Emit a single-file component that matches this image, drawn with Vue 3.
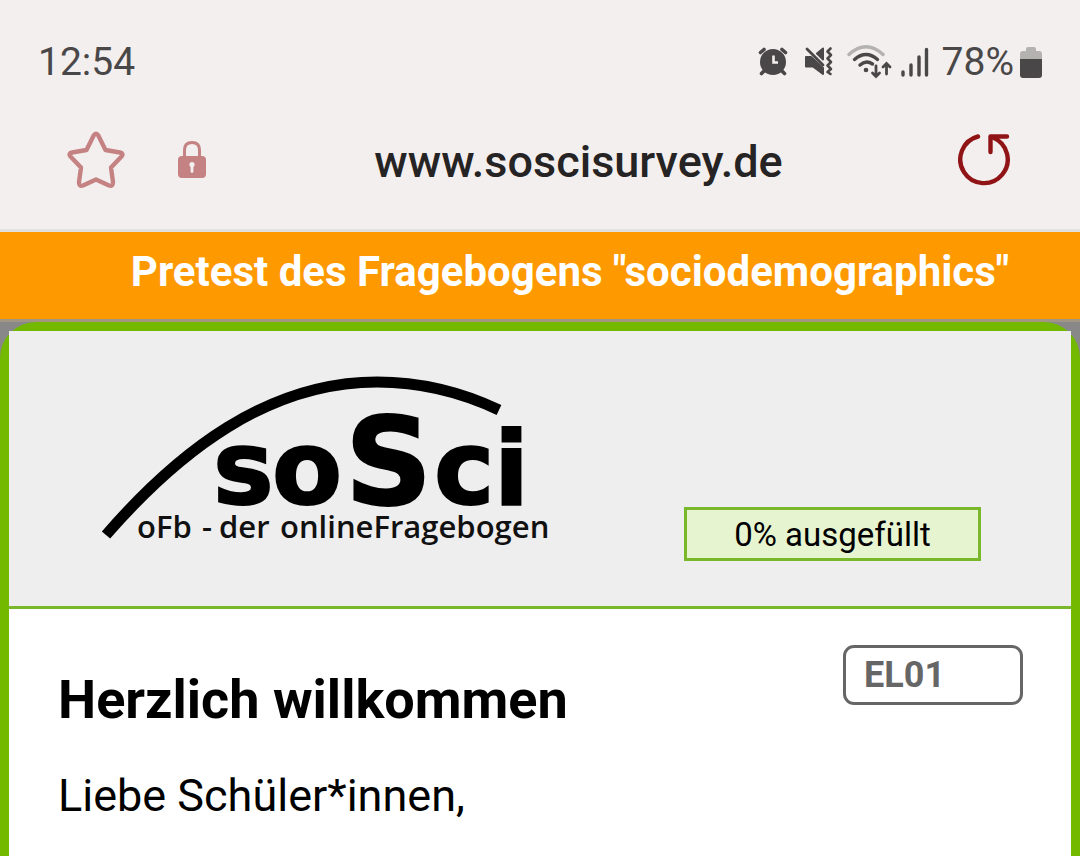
<script setup>
import { ref } from 'vue'

const time = '12:54'
const battery = '78%'
const address = ref('www.soscisurvey.de')
const progress = 0
</script>

<template>
  <div class="screen">
    <header class="browser">
      <div class="status">
        <span>{{ time }}</span>
        <div class="indicators">
          <svg class="alarm" width="32" height="32" viewBox="0 0 32 32" role="img" aria-label="Wecker">
            <g fill="none" stroke="#4a4748" stroke-width="3.6" stroke-linecap="round">
              <path d="M3.500 6.500 7 3.500M28.500 6.500 25 3.500M7 25 4.500 27.500M25 25 27.500 27.500" />
            </g>
            <circle cx="16" cy="16" r="13" fill="#4a4748" />
            <path d="M16.500 9.500V16.500H21" fill="none" stroke="#f3efee" stroke-width="2.600" />
          </svg>
          <svg class="mute" width="32" height="32" viewBox="0 0 32 32" role="img" aria-label="Vibration">
            <g fill="#4a4748" stroke="#4a4748" stroke-width="2" stroke-linejoin="round">
              <path d="M3 11H8L20 22V28L10 20.500H3Z" />
              <path d="M14 7.500 20 2.500V13.500Z" />
            </g>
            <path d="M4 3 20 19" fill="none" stroke="#4a4748" stroke-width="2.800" stroke-linecap="round" />
            <path d="M27.500 2.500 24.500 5.500 28 9 24.500 12.500 28 16 24.500 19.500 28 23 24.500 26 27.500 28" fill="none" stroke="#4a4748" stroke-width="2.600" stroke-linecap="round" stroke-linejoin="round" />
          </svg>
          <svg class="wifi" width="46" height="36" viewBox="0 0 46 36" role="img" aria-label="WLAN">
            <g fill="none" stroke-width="3.400" stroke-linecap="round">
              <path d="M3 10.500Q20 -5 37 10.500" stroke="#b4b1b1" />
              <path d="M8.500 15.500Q20 5.500 31.500 15.500M14 21Q20 15.500 26.500 20" stroke="#4a4748" />
              <path d="M30 22V32.500M26.500 29 30 32.500 33.500 29M40.500 30V19.500M37 23 40.500 19.500 44 23" stroke="#4a4748" stroke-width="2.800" />
            </g>
            <circle cx="20" cy="26" r="2.300" fill="#4a4748" />
          </svg>
          <svg class="signal" width="30" height="32" viewBox="0 0 30 32" role="img" aria-label="Empfang">
            <path d="M3 26V29M11 19V29M19 11V29M26.500 3.500V29" fill="none" stroke="#4a4748" stroke-width="3.400" stroke-linecap="round" />
          </svg>
          <span>{{ battery }}</span>
          <svg class="battery" width="22" height="32" viewBox="0 0 22 32" aria-hidden="true">
            <path d="M6 3Q6 1 8 1H14Q16 1 16 3V5H19Q22 5 22 8V14H0V8Q0 5 3 5H6Z" fill="#b4b1b1" />
            <path d="M0 13H22V29Q22 32 19 32H3Q0 32 0 29Z" fill="#4a4748" />
          </svg>
        </div>
      </div>
      <div class="toolbar">
        <div class="tools">
          <button type="button" aria-label="Lesezeichen">
            <svg width="58" height="58" viewBox="0 0 58 58">
              <path d="M26.700 4.500Q29 1 31.300 4.500L38.500 19 53 21.500Q57 22.500 54.500 25.500L44 36.500 46 51Q46 56 42 54.500L29 48.500 16 54.500Q12 56 12 51L14 36.500 3.500 25.500Q1 22.500 5 21.500L19.500 19Z" fill="none" stroke="#c58283" stroke-width="4.400" stroke-linejoin="round" />
            </svg>
          </button>
          <button type="button" aria-label="Sichere Verbindung">
            <svg width="28" height="38" viewBox="0 0 28 38">
              <path d="M6.500 17V9Q6.500 1.500 14 1.500T21.500 9V17" fill="none" stroke="#c58283" stroke-width="3" />
              <rect y="15" width="28" height="22" rx="4" fill="#c58283" />
              <circle cx="14" cy="23.500" r="2.600" fill="#f3efee" />
              <path d="M14 24V30.500" stroke="#f3efee" stroke-width="2.800" stroke-linecap="round" />
            </svg>
          </button>
        </div>
        <input v-model="address" class="address" type="text" aria-label="Adresse" />
        <button type="button" class="reload" aria-label="Neu laden">
          <svg width="54" height="54" viewBox="0 0 54 54">
            <path d="M22 3.500A23.700 23.700 0 1 0 37 4.500" fill="none" stroke="#901416" stroke-width="4.400" stroke-linecap="round" />
            <path d="M34.500 19V3.500H51" fill="none" stroke="#901416" stroke-width="4.400" stroke-linecap="round" stroke-linejoin="round" />
          </svg>
        </button>
      </div>
    </header>

    <div class="banner">Pretest des Fragebogens "sociodemographics"</div>

    <main class="page">
      <div class="card">
        <div class="masthead">
          <svg class="logo" width="460" height="180" viewBox="0 0 460 180" role="img" aria-label="soSci oFb - der onlineFragebogen">
            <path d="M15 165C88 81 177 12 286 12C331 12 370 22 408 40" fill="none" stroke="#000" stroke-width="11" />
            <g class="wordmark">
              <text x="122" y="134">s</text>
              <text x="181" y="134">o</text>
              <text class="big" x="254" y="134">S</text>
              <text x="343" y="134">c</text>
              <text x="403" y="134">i</text>
            </g>
            <text class="tagline" y="168">
              <tspan x="46">oFb</tspan>
              <tspan x="111">-</tspan>
              <tspan x="128">der</tspan>
              <tspan x="189">onlineFragebogen</tspan>
            </text>
          </svg>
          <div class="progress">{{ progress }}% ausgefüllt</div>
        </div>
        <section class="content">
          <div class="question">EL01</div>
          <h1>Herzlich willkommen</h1>
          <p>Liebe Schüler*innen,</p>
        </section>
      </div>
    </main>
  </div>
</template>

<style>
body {
  background: #888;
}
</style>

<style scoped>
.screen {
  display: flex;
  flex-direction: column;
  min-height: 100vh;
  font-family: Roboto, "Liberation Sans", sans-serif;
  color: #000;
}

.browser {
  background: #f3efee;
  border-bottom: 3px solid #e3e1e0;
}

.status {
  display: flex;
  justify-content: space-between;
  align-items: center;
  padding: 40px 38px 0;
  font-size: 39px;
  line-height: 44px;
  color: #4a4748;
}

.indicators {
  display: flex;
  align-items: center;
}

.mute {
  margin-left: 14px;
}

.wifi {
  margin-left: 11px;
}

.signal {
  margin: 0 12px 0 8px;
}

.battery {
  margin-left: 6px;
}

.toolbar {
  display: grid;
  grid-template-columns: 140px 1fr 140px;
  align-items: center;
  height: 145px;
  padding: 6px 70px 0 67px;
  box-sizing: border-box;
}

.tools {
  display: flex;
  align-items: center;
  gap: 53px;
}

button {
  display: block;
  padding: 0;
  border: 0;
  background: none;
}

button svg {
  display: block;
}

.address {
  min-width: 0;
  padding: 4px 0 0;
  border: 0;
  background: none;
  font: 500 45px/56px Roboto, "Liberation Sans", sans-serif;
  color: #252323;
  text-align: center;
  margin-left: 80px;
}

.reload {
  justify-self: end;
}

.banner {
  padding: 12px 0 19px 60px;
  background: #ff9900;
  color: #fff;
  font-size: 42px;
  font-weight: 700;
  line-height: 56px;
  text-align: center;
}

.page {
  display: flex;
  flex: 1;
  border-top: 3px solid #a39583;
  background: #888;
}

.card {
  display: flex;
  flex-direction: column;
  flex: 1;
  border: 9px solid #73b900;
  border-bottom: 0;
  border-radius: 36px 36px 0 0;
}

.masthead {
  display: flex;
  justify-content: space-between;
  align-items: flex-end;
  padding: 39px 90px 45px 82px;
  border-bottom: 3px solid #78b82a;
  background: #eee;
}

.logo {
  display: block;
  margin-bottom: 11px;
}

.wordmark {
  font-family: "DejaVu Sans", sans-serif;
  font-size: 102px;
  font-weight: 700;
  stroke: #000;
  stroke-width: 2px;
}

.big {
  font-size: 121px;
}

.tagline {
  font-family: "Open Sans", "Noto Sans", sans-serif;
  font-size: 31px;
  font-weight: 600;
  fill: #111;
}

.progress {
  width: 291px;
  padding-top: 2px;
  border: 3px solid #78b82a;
  background: #e6f5d0;
  font-size: 33px;
  line-height: 46px;
  text-align: center;
}

.content {
  flex: 1;
  padding: 36px 48px 0 49px;
  background: #fff;
}

.question {
  float: right;
  box-sizing: border-box;
  width: 180px;
  padding: 0 18px;
  border: 3px solid #666;
  border-radius: 11px;
  color: #666;
  font-size: 36px;
  font-weight: 700;
  line-height: 54px;
}

h1 {
  margin: 23px 0 0;
  font-size: 54px;
  font-weight: 700;
  line-height: 64px;
}

p {
  margin: 34px 0 0;
  font-size: 45px;
  line-height: 60px;
}
</style>
